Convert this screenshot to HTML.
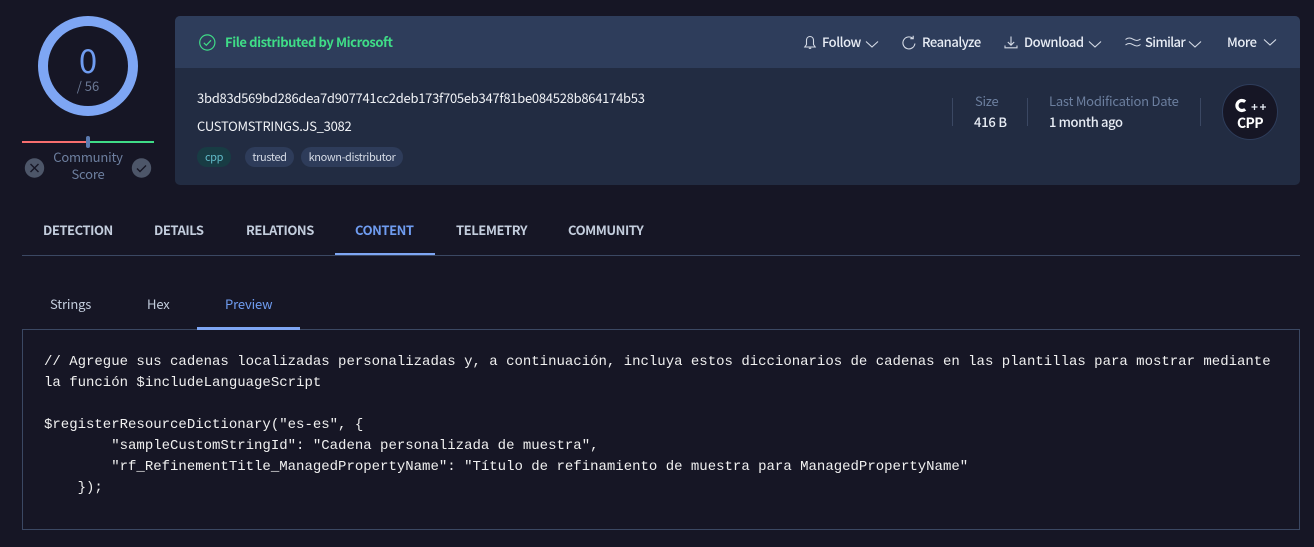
<!DOCTYPE html>
<html><head><meta charset="utf-8">
<style>
*{box-sizing:border-box}
html,body{margin:0;padding:0;background:#161625;width:1314px;height:547px;overflow:hidden}
body{font-family:"Noto Sans CJK JP","Liberation Sans",sans-serif;position:relative}
.a{position:absolute;white-space:nowrap;line-height:20px}
svg{position:absolute;overflow:visible}
.ac{color:#e8edf5;font-size:13px;font-weight:500;top:32px;letter-spacing:-.45px}
.i{fill:none;stroke:#d5dbe6;stroke-width:1.1}
.tag{position:absolute;top:147px;height:20px;border-radius:10px;background:#2e3c5a;color:#d5dbe6;font-size:11px;letter-spacing:-.38px;line-height:20px;text-align:center;white-space:nowrap}
.tab{position:absolute;top:220px;font-size:13px;font-weight:700;color:#c3cddd;line-height:20px;white-space:nowrap;letter-spacing:-.45px}
.sub{position:absolute;top:294px;font-size:13px;color:#c3cddd;line-height:20px;white-space:nowrap;letter-spacing:-.15px}
pre{position:absolute;left:44px;top:352px;margin:0;font-family:"Liberation Mono",monospace;font-size:14px;line-height:21px;color:#f0f0f0;white-space:pre}
</style></head><body>

<svg style="left:38px;top:16px" width="100" height="100"><circle cx="50" cy="50" r="45" fill="none" stroke="#7ea6f4" stroke-width="10"/></svg>
<div class="a" style="left:38px;width:100px;text-align:center;top:41px;font-size:33px;line-height:36px;color:#6f9cf0;font-weight:400">0</div>
<div class="a" style="left:38px;width:100px;text-align:center;top:76px;font-size:13px;color:#6c7a96;font-weight:400">/ 56</div>

<div class="a" style="left:22px;top:141px;width:65px;height:2px;background:#f76e6e"></div>
<div class="a" style="left:89px;top:141px;width:65px;height:2px;background:#3fdc87"></div>
<div class="a" style="left:86px;top:136px;width:4px;height:12px;background:#5b7bb0;border-radius:2px"></div>
<div class="a" style="left:38px;width:100px;text-align:center;top:148px;font-size:13px;line-height:17px;color:#6d7f9f;white-space:normal;letter-spacing:-.2px">Community<br>Score</div>
<svg style="left:25px;top:158px" width="20" height="20"><circle cx="9.500" cy="10" r="9.700" fill="#4d5669"/><path d="M5.500 6l8 8M13.500 6l-8 8" stroke="#161625" stroke-width="1.400" fill="none"/></svg>
<svg style="left:131px;top:158px" width="20" height="20"><circle cx="10.500" cy="10" r="9.700" fill="#4d5669"/><path d="M6 10.500l3 3 6-6" stroke="#161625" stroke-width="1.400" fill="none"/></svg>

<div class="a" style="left:175px;top:16px;width:1125px;height:169px;background:#222c42;border-radius:5px"></div>
<div class="a" style="left:175px;top:16px;width:1125px;height:52px;background:#2e3d5b;border-radius:5px 5px 0 0"></div>

<svg style="left:199px;top:34px" width="17" height="17"><circle cx="8.300" cy="8.500" r="7.600" fill="none" stroke="#3fdc87" stroke-width="1.200"/><path d="M4.800 8.800l2.500 2.500 4.700-5" fill="none" stroke="#3fdc87" stroke-width="1.200"/></svg>
<div class="a" style="left:225px;top:32px;font-size:13px;font-weight:700;color:#3fdc87;letter-spacing:-.41px">File distributed by Microsoft</div>

<svg style="left:803px;top:35px" width="14" height="16"><path class="i" d="M7 1.500C4.700 1.500 3.500 3.300 3.500 5.500V9.500L1.800 12H12.200L10.500 9.500V5.500C10.500 3.300 9.300 1.500 7 1.500ZM5.800 13.300H8.200"/></svg>
<div class="a ac" style="left:822px">Follow</div>
<svg style="left:865px;top:40px" width="14" height="8"><path class="i" d="M1 1.500l6 5.500 6-5.500"/></svg>

<svg style="left:902px;top:35px" width="14" height="15"><path class="i" d="M10.800 3.300A6 6 0 1 0 12.900 8.500M11.200 .8V3.700H8.300"/></svg>
<div class="a ac" style="left:922px">Reanalyze</div>

<svg style="left:1004px;top:35px" width="14" height="15"><path class="i" d="M7 1.500V10M3.800 7l3.200 3.200L10.200 7M1 10.500V12.800H13V10.500"/></svg>
<div class="a ac" style="left:1024px">Download</div>
<svg style="left:1088px;top:40px" width="14" height="8"><path class="i" d="M1 1.500l6 5.500 6-5.500"/></svg>

<svg style="left:1125px;top:36px" width="16" height="13"><path class="i" d="M.5 3.500C3 1.500 5 1.500 8 3.200S13 5 15.500 3M.5 9C3 7 5 7 8 8.700S13 10.500 15.500 8.500"/></svg>
<div class="a ac" style="left:1145px;letter-spacing:-.6px">Similar</div>
<svg style="left:1188px;top:40px" width="14" height="8"><path class="i" d="M1 1.500l6 5.500 6-5.500"/></svg>

<div class="a ac" style="left:1227px">More</div>
<svg style="left:1263px;top:38px" width="14" height="8"><path class="i" d="M1 1.500l6 5.500 6-5.500"/></svg>

<div class="a" style="left:197px;top:88px;font-size:13px;color:#f0f2f6;letter-spacing:-.27px">3bd83d569bd286dea7d907741cc2deb173f705eb347f81be084528b864174b53</div>
<div class="a" style="left:197px;top:116px;font-size:13px;color:#f0f2f6;letter-spacing:-.28px">CUSTOMSTRINGS.JS_3082</div>

<div class="tag" style="left:197px;width:34px;background:#183c44;color:#5fb8c6">cpp</div>
<div class="tag" style="left:245px;width:49px">trusted</div>
<div class="tag" style="left:301px;width:102px">known-distributor</div>

<div class="a" style="left:952px;top:98px;width:1px;height:28px;background:#3b4863"></div>
<div class="a" style="left:1027px;top:98px;width:1px;height:28px;background:#3b4863"></div>
<div class="a" style="left:1200px;top:98px;width:1px;height:28px;background:#3b4863"></div>
<div class="a" style="left:975px;top:91px;font-size:13px;color:#6c7f9f;letter-spacing:-.3px">Size</div>
<div class="a" style="left:974px;top:112px;font-size:13px;font-weight:500;color:#e8edf5;letter-spacing:-.2px">416 B</div>
<div class="a" style="left:1049px;top:91px;font-size:13px;color:#6c7f9f;letter-spacing:-.23px">Last Modification Date</div>
<div class="a" style="left:1049px;top:112px;font-size:13px;font-weight:500;color:#e8edf5;letter-spacing:-.36px">1 month ago</div>

<svg style="left:1222px;top:84px" width="56" height="56"><circle cx="28" cy="28" r="27.500" fill="#161625" stroke="#2e3d5b" stroke-width="1"/><path d="M23.200 17.700A5 5 0 1 0 23.200 25.300" fill="none" stroke="#fff" stroke-width="3.200"/><path d="M32.500 20v6M29.500 23h6M41 20v6M38 23h6" stroke="#e8edf5" stroke-width="1.300" fill="none"/></svg>
<div class="a" style="left:1222px;width:56px;text-align:center;top:113px;font-size:14px;font-weight:700;color:#fff;letter-spacing:-.6px">CPP</div>

<div class="tab" style="left:43px">DETECTION</div>
<div class="tab" style="left:154px">DETAILS</div>
<div class="tab" style="left:246px">RELATIONS</div>
<div class="tab" style="left:355px;color:#6f9cf0">CONTENT</div>
<div class="tab" style="left:456px">TELEMETRY</div>
<div class="tab" style="left:568px">COMMUNITY</div>
<div class="a" style="left:22px;top:255px;width:1278px;height:1px;background:#3b4863"></div>
<div class="a" style="left:335px;top:253px;width:100px;height:2px;background:#7ea6f4"></div>

<div class="sub" style="left:50px">Strings</div>
<div class="sub" style="left:147px">Hex</div>
<div class="sub" style="left:225px;color:#6f9cf0">Preview</div>

<div class="a" style="left:22px;top:329px;width:1278px;height:201px;border:1px solid #3b4863"></div>
<div class="a" style="left:197px;top:327px;width:103px;height:3px;background:#7ea6f4"></div>

<pre>// Agregue sus cadenas localizadas personalizadas y, a continuación, incluya estos diccionarios de cadenas en las plantillas para mostrar mediante
la función $includeLanguageScript

$registerResourceDictionary("es-es", {
        "sampleCustomStringId": "Cadena personalizada de muestra",
        "rf_RefinementTitle_ManagedPropertyName": "Título de refinamiento de muestra para ManagedPropertyName"
    });</pre>
</body></html>
